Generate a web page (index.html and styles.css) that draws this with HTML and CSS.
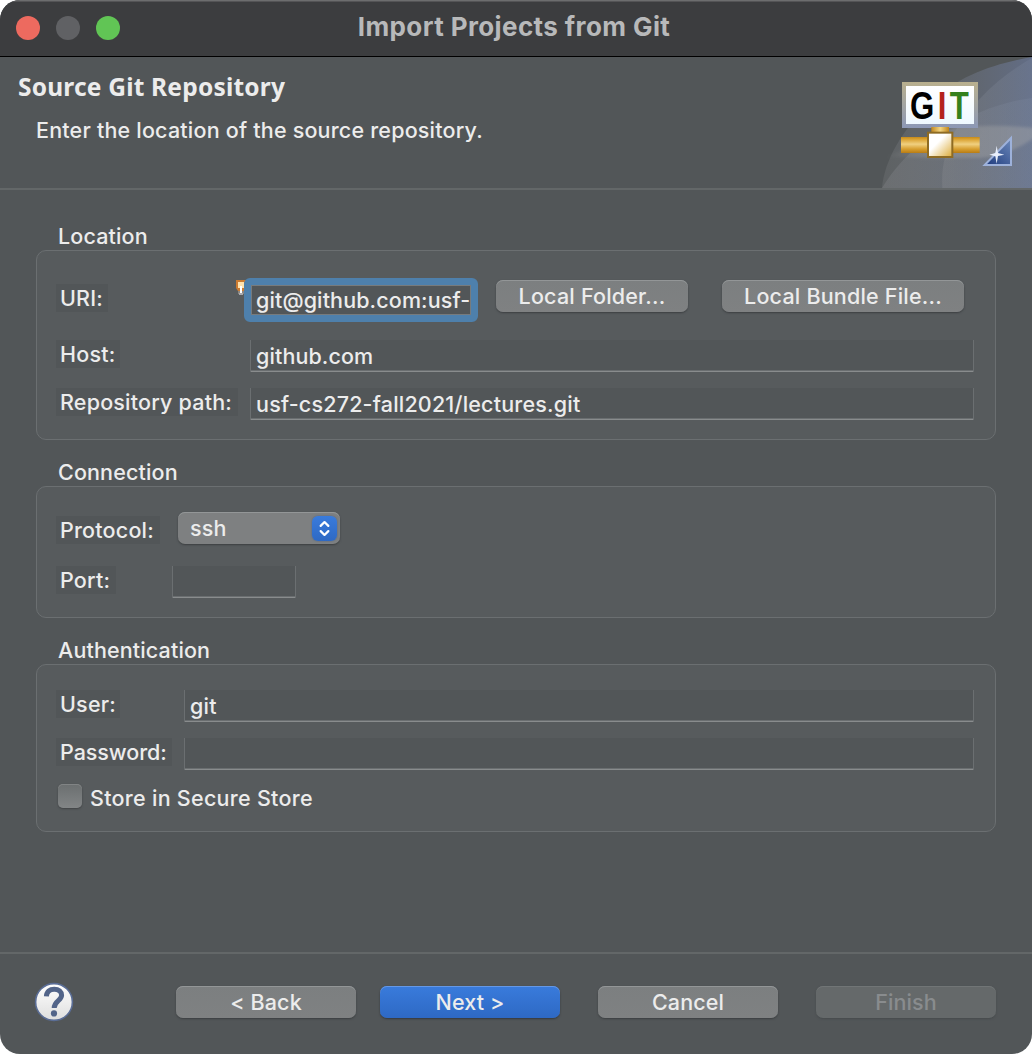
FILE: index.html
```html
<!DOCTYPE html>
<html lang="en">
<head>
<meta charset="utf-8">
<title>Import Projects from Git</title>
<link rel="stylesheet" href="styles.css">
</head>
<body>
<main class="window">
  <header class="titlebar">
    <div class="lights"><i class="light red"></i><i class="light gray"></i><i class="light green"></i></div>
    <h1>Import Projects from Git</h1>
  </header>

  <section class="banner">
    <div class="banner-text">
      <h2>Source Git Repository</h2>
      <p>Enter the location of the source repository.</p>
    </div>
    <svg class="banner-art" viewBox="30 21 450 393" width="150" height="131">
      <defs>
        <linearGradient id="sweep" x1="0" x2="1"><stop offset="0" stop-color="#747779" stop-opacity=".35"/><stop offset=".55" stop-color="#666c76" stop-opacity=".7"/><stop offset="1" stop-color="#626d86"/></linearGradient>
        <linearGradient id="sweep2" x1="0" x2="1"><stop offset="0" stop-color="#8c8d91" stop-opacity=".3"/><stop offset="1" stop-color="#8390a8" stop-opacity=".2"/></linearGradient>
        <linearGradient id="beam" x1="0" x2="1"><stop offset="0" stop-color="#aaa" stop-opacity="0"/><stop offset=".3" stop-color="#aaa" stop-opacity=".3"/><stop offset="1" stop-color="#aaa" stop-opacity=".4"/></linearGradient>
        <linearGradient id="frame" x1="0" x2="0" y1="0" y2="1"><stop offset="0" stop-color="#b9b08e"/><stop offset="1" stop-color="#8c98b6"/></linearGradient>
        <linearGradient id="paper" x1="0" x2="0" y1="0" y2="1"><stop offset="0" stop-color="#fff"/><stop offset="1" stop-color="#eef8ff"/></linearGradient>
        <linearGradient id="pipe" x1="0" x2="0" y1="0" y2="1"><stop offset="0" stop-color="#c48a1c"/><stop offset=".12" stop-color="#d99f2c"/><stop offset=".45" stop-color="#f0d080"/><stop offset=".75" stop-color="#d79f30"/><stop offset="1" stop-color="#b87c14"/></linearGradient>
        <linearGradient id="neck" x1="0" x2="1"><stop offset="0" stop-color="#c18820"/><stop offset=".5" stop-color="#f3d582"/><stop offset="1" stop-color="#bf861d"/></linearGradient>
        <linearGradient id="joint" x1="0" x2="1" y1="0" y2="1"><stop offset=".4" stop-color="#fff"/><stop offset="1" stop-color="#dcaa35"/></linearGradient>
        <linearGradient id="tri" x1="1" x2="0" y1="0" y2="1"><stop offset="0" stop-color="#6d8abb"/><stop offset="1" stop-color="#1d397c"/></linearGradient>
        <filter id="soft" x="-10%" y="-30%" width="120%" height="160%"><feGaussianBlur stdDeviation="5"/></filter>
      </defs>
      <path d="M30 414C38 330 90 240 175 158S365 42 480 21V414Z" fill="url(#sweep)"/>
      <path d="M30 414C100 300 200 230 320 188C380 164 430 150 480 144V414Z" fill="url(#sweep2)"/>
      <path d="M211 414C204 300 258 214 320 150C370 96 425 55 480 24V414Z" fill="url(#sweep2)"/>
      <path d="M40 322L250 232Q370 222 490 234V262Q410 318 320 324Z" fill="url(#beam)" filter="url(#soft)"/>
      <rect x="90" y="96" width="228" height="138" fill="url(#frame)"/>
      <rect x="102" y="108" width="204" height="114" fill="url(#paper)"/>
      <text class="git-word" transform="translate(114 207) scale(.8 1)">G<tspan fill="#b3221d">I</tspan><tspan fill="#35801d">T</tspan></text>
      <rect x="178" y="231" width="53" height="18" fill="url(#neck)"/>
      <rect x="87" y="261" width="236" height="48" fill="url(#pipe)"/>
      <rect x="168" y="248" width="73" height="73" fill="url(#joint)" stroke="#8e6b23" stroke-width="6"/>
      <path d="M338 345H417V264Z" fill="url(#tri)" stroke="#9db1da" stroke-width="6"/>
      <path d="M374 287L378 309L397 314L378 318L374 341L370 319L352 314L370 309Z" fill="#e8eefb"/>
    </svg>
  </section>

  <section class="content">
    <h3>Location</h3>
    <div class="group location">
      <div class="row uri-row">
        <label class="w-uri">URI:</label>
        <div class="uri-field">
          <svg class="bulb" viewBox="0 0 10 16" width="10" height="16"><path d="M0 0H10V8L8 11H2L0 8Z" fill="#cc7b31"/><path d="M2 2H8V8H6V11H4V8H2Z" fill="#ffe2ad"/><path d="M4 6H6V13H4Z" fill="#fff"/><path d="M2 11H4V14H2ZM6 11H8V14H6Z" fill="#8b8781"/><path d="M3 13H7V15H3Z" fill="#a9a9ad"/></svg>
          <div class="field focused">git@github.com:usf-</div>
        </div>
        <button class="btn b-folder">Local Folder...</button>
        <button class="btn b-bundle">Local Bundle File...</button>
      </div>
      <div class="row host-row">
        <label class="w-host">Host:</label>
        <div class="field">github.com</div>
      </div>
      <div class="row path-row">
        <label class="w-path">Repository path:</label>
        <div class="field">usf-cs272-fall2021/lectures.git</div>
      </div>
    </div>

    <h3>Connection</h3>
    <div class="group connection">
      <div class="row protocol-row">
        <label class="w-protocol">Protocol:</label>
        <div class="select">ssh
          <svg class="stepper" viewBox="0 0 26 26" width="25" height="25"><path d="M9 10.300L13 6.300L17 10.300M9 15.700L13 19.700L17 15.700" fill="none" stroke="#fff" stroke-width="2.300" stroke-linecap="round" stroke-linejoin="round"/></svg>
        </div>
      </div>
      <div class="row port-row">
        <label class="w-port">Port:</label>
        <div class="field"></div>
      </div>
    </div>

    <h3>Authentication</h3>
    <div class="group auth">
      <div class="row user-row">
        <label class="w-user">User:</label>
        <div class="field">git</div>
      </div>
      <div class="row password-row">
        <label class="w-password">Password:</label>
        <div class="field"></div>
      </div>
      <div class="check-row"><i class="checkbox"></i><span>Store in Secure Store</span></div>
    </div>
  </section>

  <footer class="footer">
    <svg class="help" viewBox="0 0 40 40" width="40" height="40"><defs><linearGradient id="disc" x1="0" x2="0" y1="0" y2="1"><stop offset="0" stop-color="#fff"/><stop offset="1" stop-color="#dedede"/></linearGradient></defs><circle cx="20" cy="20" r="18.400" fill="url(#disc)" stroke="#5a6d96" stroke-width="1.600"/><path d="M12.400 14.400C12.600 9.400 16 7.200 20.200 7.200C24.800 7.200 27.600 9.800 27.600 13.300C27.600 18.600 20.200 18.800 20.200 26" fill="none" stroke="#526489" stroke-width="5"/><circle cx="20" cy="31.400" r="3.100" fill="#526489"/></svg>
    <div class="actions">
      <button class="btn">&lt; Back</button>
      <button class="btn primary">Next &gt;</button>
      <button class="btn cancel">Cancel</button>
      <button class="btn finish" disabled>Finish</button>
    </div>
  </footer>
</main>
</body>
</html>
```
FILE: styles.css
```css
* { box-sizing: border-box; margin: 0; padding: 0; }
body { background: #fff; color: #ececec; font: 450 21.5px/28px Inter, "Liberation Sans", sans-serif; letter-spacing: .2px; white-space: nowrap; }
.window { width: 1032px; height: 1054px; background: #525658; border-radius: 20px; overflow: hidden; display: flex; flex-direction: column; }
.titlebar { height: 57px; background: #3c3d3f; border-bottom: 1px solid #000; box-shadow: inset 0 1.5px #6c6d6e; display: grid; grid-template-columns: 120px 1fr 124px; align-items: center; }
.lights { display: flex; gap: 16px; padding-left: 16px; }
.light { width: 24px; height: 24px; flex: none; border-radius: 50%; }
.red { background: #ed6a5f; }
.gray { background: #606164; }
.green { background: #61c555; }
h1 { text-align: center; font-size: 26px; font-weight: 700; letter-spacing: .4px; color: #b8b9ba; line-height: 54px; height: 56px; }
.banner { height: 133px; display: flex; justify-content: space-between; border-bottom: 2px solid #636768; }
.banner-text { padding: 13px 0 0 18px; }
h2 { font: 700 24.5px/34px "Noto Sans", sans-serif; letter-spacing: .2px; }
p { padding: 12px 0 0 18px; }
.git-word { font: 700 117px "Liberation Sans", Arial, sans-serif; letter-spacing: 13px; fill: #000; }
.content { flex: 1; padding: 32px 36px 0; }
h3 { font-size: 21.5px; line-height: 28px; font-weight: 450; letter-spacing: .14px; padding-left: 22px; }
.group { border: 1px solid #6b6f71; border-radius: 10px; background: #575b5d; padding-left: 19px; margin-bottom: 18px; }
.location { height: 190px; }
.connection { height: 132px; }
.auth { height: 168px; }
.row { display: flex; align-items: flex-start; }
label { height: 28px; padding-left: 4px; background: #525658; flex: none; }
.w-uri { width: 52px; margin-top: 4px; }
.w-host { width: 64px; }
.w-path { width: 182px; }
.w-protocol { width: 104px; margin-top: 4px; }
.w-port { width: 60px; }
.w-user { width: 64px; }
.w-password { width: 116px; letter-spacing: -.05px; }
.field { height: 32px; line-height: 32px; padding-left: 5px; background: #525658; border: solid #6b6f71; border-width: 0 1px; box-shadow: inset 0 -1px #898c8d, inset 0 -2px #6a6e70; }
.uri-row { padding-top: 29px; height: 89px; }
.uri-field { margin-left: 128px; margin-top: -2px; display: flex; }
.bulb { margin: 2px -2px 0 0; flex: none; }
.focused { width: 234px; height: 44px; line-height: 30px; letter-spacing: .12px; border: 7px solid #4e80ac; border-radius: 6px; box-shadow: inset 0 0 0 1px #777b7d; position: relative; }
.host-row .field { width: 724px; margin-left: 130px; letter-spacing: .1px; }
.host-row { height: 48px; }
.path-row .field { width: 724px; margin-left: 12px; }
.btn { height: 32px; border: 0; border-radius: 7px; color: #ececec; font: inherit; line-height: 32px; letter-spacing: .12px; background: linear-gradient(#7c7f80, #7f8182); box-shadow: 0 1px 2px #3b3e40, inset 0 1px #939697; text-align: center; }
.b-folder { width: 192px; margin-left: 18px; letter-spacing: .2px; }
.b-bundle { width: 242px; margin-left: 34px; letter-spacing: .2px; }
.protocol-row { padding-top: 25px; height: 79px; }
.select { width: 162px; height: 32px; margin-left: 18px; padding: 0 3px 0 12px; line-height: 32px; border-radius: 7px; background: #7e8081; box-shadow: 0 1px 2px #3b3e40, inset 0 1px #939697; display: flex; align-items: center; justify-content: space-between; }
.stepper { border-radius: 6px; background: linear-gradient(#397bdc, #2e69c4); box-shadow: 0 0 2px #4a5f82; }
.port-row .field { width: 124px; margin-left: 56px; }
.user-row { padding-top: 25px; height: 73px; }
.user-row .field { width: 790px; margin-left: 64px; }
.password-row { height: 32px; }
.password-row .field { width: 790px; margin-left: 12px; }
.check-row { display: flex; align-items: center; gap: 8px; height: 28px; margin-top: 14px; padding-left: 2px; letter-spacing: .28px; }
.checkbox { width: 24px; height: 24px; margin-top: -4px; border-radius: 5px; background: linear-gradient(#6b6f70, #828586); box-shadow: 0 1px 2px #3f4244, inset 0 1px #818485; }
.footer { height: 102px; border-top: 2px solid #636768; display: flex; align-items: flex-start; justify-content: space-between; padding: 28px 36px 0 34px; }
.actions { display: flex; padding-top: 4px; }
.actions .btn { width: 180px; margin-right: 24px; }
.actions .primary { background: linear-gradient(#397bdc, #2e69c4); box-shadow: 0 1px 2px #34383d, inset 0 1px #6598e6; margin-right: 38px; }
.actions .cancel { margin-right: 38px; }
.actions .finish { margin-right: 0; color: #898c8e; background: #65696a; box-shadow: 0 1px 2px #474b4d, inset 0 1px #717576; }
```
